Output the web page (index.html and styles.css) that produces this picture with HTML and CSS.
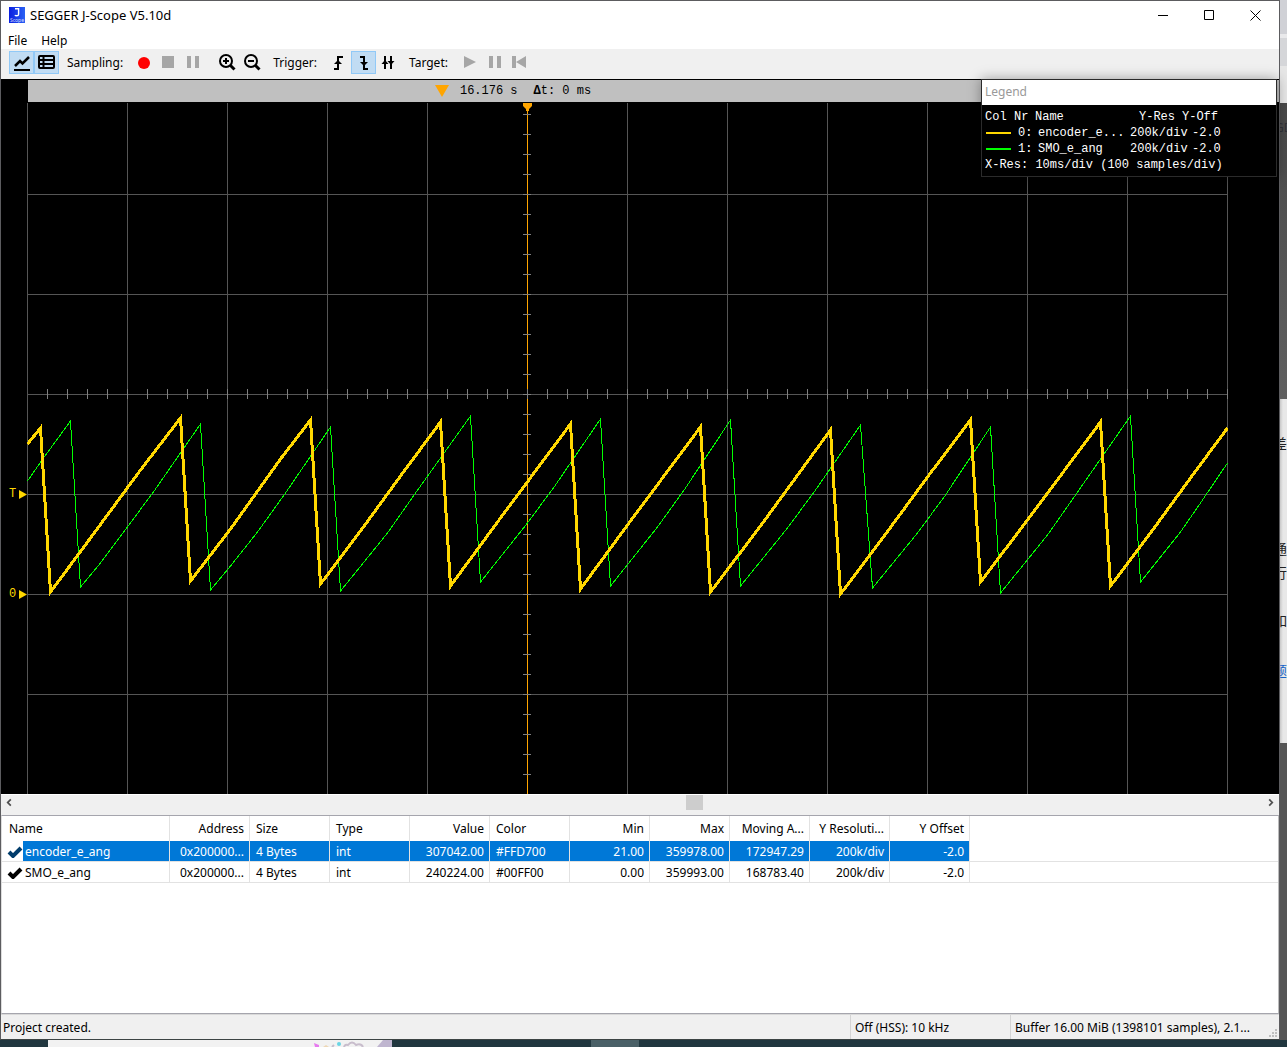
FILE: index.html
```html
<!DOCTYPE html>
<html lang="en">
<head>
<meta charset="utf-8">
<title>SEGGER J-Scope V5.10d</title>
<link rel="stylesheet" href="styles.css">
</head>
<body>
<div class="desktop">
<main class="window">
  <header class="titlebar">
    <svg class="app-icon" viewBox="0 0 16 16" aria-hidden="true">
      <defs><linearGradient id="app" x1="0" y1="0" x2="1" y2="0"><stop offset="0" stop-color="#0a1ee0"/><stop offset="1" stop-color="#2a62f4"/></linearGradient></defs>
      <rect width="16" height="16" fill="url(#app)"/>
      <path d="M6 1.8h3.6v5.4q0 1.6-1.9 1.6q-1.2 0-1.9-.6" fill="none" stroke="#fff" stroke-width="1.4"/>
      <text x="8" y="15" text-anchor="middle" font-size="5" fill="#d5dcff">Scope</text>
    </svg>
    <h1 class="title">SEGGER J-Scope V5.10d</h1>
    <div class="caption">
      <button aria-label="Minimize"><svg viewBox="0 0 11 11"><path d="M0 5.5h10"/></svg></button>
      <button aria-label="Maximize"><svg viewBox="0 0 11 11"><path d="M.5.5h9v9h-9z"/></svg></button>
      <button aria-label="Close"><svg viewBox="0 0 11 11"><path d="M.5.5l10 10M10.500.5l-10 10"/></svg></button>
    </div>
  </header>
  <nav class="menu"><button>File</button><button>Help</button></nav>

  <div class="toolbar">
    <button class="tool on" aria-label="Show graph"><svg viewBox="0 0 25 23"><path d="M5 19h16" stroke="#000" stroke-width="2"/><path d="M6 15l5-5 2.500 2.500L20 6" fill="none" stroke="#000" stroke-width="2.500"/></svg></button>
    <button class="tool on" aria-label="Show list"><svg viewBox="0 0 25 23"><rect x="5" y="5" width="15" height="12" rx="1" fill="none" stroke="#000" stroke-width="2"/><path d="M5 9h15M5 13h15M9.500 5v12" stroke="#000" stroke-width="2"/></svg></button>
    <span class="label">Sampling:</span>
    <button class="tool" aria-label="Record"><svg viewBox="0 0 25 23"><circle cx="12" cy="12" r="6" fill="red"/></svg></button>
    <button class="tool" aria-label="Stop"><svg viewBox="0 0 25 23"><path d="M5 5h12v12H5z" fill="#a6a6a6"/></svg></button>
    <button class="tool" aria-label="Pause"><svg viewBox="0 0 25 23"><path d="M5 5h4v12H5zM13 5h4v12h-4z" fill="#a6a6a6"/></svg></button>
    <span class="gap"></span>
    <button class="tool" aria-label="Zoom in"><svg viewBox="0 0 25 23"><circle cx="11" cy="10" r="6" fill="none" stroke="#000" stroke-width="2"/><path d="M8 10h6M11 7v6" stroke="#000" stroke-width="2"/><path d="M15.500 14.500l4 4" stroke="#000" stroke-width="3"/></svg></button>
    <button class="tool" aria-label="Zoom out"><svg viewBox="0 0 25 23"><circle cx="11" cy="10" r="6" fill="none" stroke="#000" stroke-width="2"/><path d="M8 10h6" stroke="#000" stroke-width="2"/><path d="M15.500 14.500l4 4" stroke="#000" stroke-width="3"/></svg></button>
    <span class="label">Trigger:</span>
    <button class="tool" aria-label="Rising edge"><svg viewBox="0 0 25 23"><path d="M8 18h4V6h5" fill="none" stroke="#000" stroke-width="2"/><path d="M8 13l4-4 4 4z"/></svg></button>
    <button class="tool on" aria-label="Falling edge"><svg viewBox="0 0 25 23"><path d="M9 6h4v12h4" fill="none" stroke="#000" stroke-width="2"/><path d="M9 11l4 4 4-4z"/></svg></button>
    <button class="tool" aria-label="Both edges"><svg viewBox="0 0 25 23"><path d="M9 5v13M15 5v13" stroke="#000" stroke-width="2"/><path d="M5.500 13L9 9l3.500 4zM11.500 10L15 14l3.500-4z"/></svg></button>
    <span class="label">Target:</span>
    <button class="tool" aria-label="Run"><svg viewBox="0 0 25 23"><path d="M7 5v12l12-6z" fill="#a6a6a6"/></svg></button>
    <button class="tool" aria-label="Halt"><svg viewBox="0 0 25 23"><path d="M7 5h4v12H7zM15 5h4v12h-4z" fill="#a6a6a6"/></svg></button>
    <button class="tool" aria-label="Reset"><svg viewBox="0 0 25 23"><path d="M5 5h4v12H5zM19 5v12L9 11z" fill="#a6a6a6"/></svg></button>
  </div>

  <section class="scope">
    <div class="ruler">
      <svg class="marker" viewBox="0 0 14 12" aria-hidden="true"><path d="M0 0h14L7 12z" fill="#ffa500"/></svg>
      <span class="time">16.176 s</span><span><b>Δ</b>t: 0 ms</span>
    </div>
    <svg class="plot" viewBox="1 102 1278 692" role="img" aria-label="Signal plot">
      <g class="grid">
        <path d="M27.500 103V794M127.500 103V794M227.500 103V794M327.500 103V794M427.500 103V794M627.500 103V794M727.500 103V794M827.500 103V794M927.500 103V794M1027.500 103V794M1127.500 103V794M1227.500 103V794"/>
        <path d="M27 194.500H1228M27 294.500H1228M27 394.500H1228M27 494.500H1228M27 594.500H1228M27 694.500H1228"/>
      </g>
      <path class="cursor" d="M527.500 103V794"/>
      <path d="M523 103h9v3l-3 3v2h-3v-2l-3-3z" fill="#ffa500"/>
      <path class="ticks" d="M527 114V794" stroke-width="8" stroke-dasharray="1 19"/>
      <path class="ticks" d="M47 394H1228" stroke-width="10" stroke-dasharray="1 19"/>
      <g class="signals" transform="translate(.5 0)">
        <polyline class="smo" points="27,481 43,458 70,421 80,587 100,563 127,527 155,489 200,424 210,590 230,566 257,532 285,493 330,427 340,591 387,533 415,493 470,416 480,582 527,523 555,485 600,419 610,586 657,527 685,488 730,420 740,586 787,528 815,490 860,425 872,588 917,533 945,495 990,427 1000,593 1047,535 1075,495 1130,416 1140,582 1180,532 1200,503 1227,463"/>
        <polyline class="encoder" points="27,444 40,428 50,592 90,538 140,470 180,418 190,581 230,529 280,459 310,420 320,584 360,531 400,476 440,422 450,586 500,518 570,424 580,589 630,521 700,427 710,592 760,526 830,430 840,594 880,541 930,473 970,420 980,582 1030,516 1100,422 1110,586 1150,533 1190,478 1227,428"/>
      </g>
      <g class="axis"><text x="9" y="497">T</text><path d="M19 490v9l8-4.500z"/><text x="9" y="597">0</text><path d="M19 590v9l8-4.500z"/></g>
    </svg>

    <aside class="legend">
      <h2>Legend</h2>
      <div class="legend-body">
        <table>
          <tr><th class="c-col">Col</th><th class="c-nr">Nr</th><th class="c-name">Name</th><th class="c-res">Y-Res</th><th class="c-off">Y-Off</th></tr>
          <tr><td><i class="swatch yellow"></i></td><td class="num">0:</td><td class="sig">encoder_e...</td><td>200k/div</td><td class="off">-2.0</td></tr>
          <tr><td><i class="swatch green"></i></td><td class="num">1:</td><td class="sig">SMO_e_ang</td><td>200k/div</td><td class="off">-2.0</td></tr>
        </table>
        <p>X-Res: 10ms/div (100 samples/div)</p>
      </div>
    </aside>
  </section>

  <div class="scroller">
    <button aria-label="Scroll left"><svg viewBox="0 0 17 17"><path d="M10 5L6.500 8.500 10 12"/></svg></button>
    <span class="before"></span><span class="thumb"></span><span class="after"></span>
    <button aria-label="Scroll right"><svg viewBox="0 0 17 17"><path d="M7 5l3.500 3.500L7 12"/></svg></button>
  </div>

  <section class="symbols">
    <table>
      <colgroup><col class="wide"><col><col><col><col><col><col><col><col><col><col><col class="rest"></colgroup>
      <thead><tr><th class="first">Name</th><th class="r">Address</th><th>Size</th><th>Type</th><th class="r">Value</th><th>Color</th><th class="r">Min</th><th class="r">Max</th><th class="r">Moving A...</th><th class="r">Y Resoluti...</th><th class="r">Y Offset</th><th class="rest"></th></tr></thead>
      <tbody>
        <tr class="selected"><td class="name"><svg viewBox="0 0 16 12" aria-hidden="true"><path d="M2 6l4 4 8-8"/></svg>encoder_e_ang</td><td class="r">0x200000...</td><td>4 Bytes</td><td>int</td><td class="r">307042.00</td><td>#FFD700</td><td class="r">21.00</td><td class="r">359978.00</td><td class="r">172947.29</td><td class="r">200k/div</td><td class="r">-2.0</td><td class="rest"></td></tr>
        <tr><td class="name"><svg viewBox="0 0 16 12" aria-hidden="true"><path d="M2 6l4 4 8-8"/></svg>SMO_e_ang</td><td class="r">0x200000...</td><td>4 Bytes</td><td>int</td><td class="r">240224.00</td><td>#00FF00</td><td class="r">0.00</td><td class="r">359993.00</td><td class="r">168783.40</td><td class="r">200k/div</td><td class="r">-2.0</td><td class="rest"></td></tr>
      </tbody>
    </table>
  </section>

  <footer class="status">
    <span class="message">Project created.</span>
    <span class="rate">Off (HSS): 10 kHz</span>
    <span class="buffer">Buffer 16.00 MiB (1398101 samples), 2.1...</span>
    <svg class="grip" viewBox="0 0 8 8" aria-hidden="true"><path d="M6 0h2v2H6zM3 3h2v2H3zM6 3h2v2H6zM0 6h2v2H0zM3 6h2v2H3zM6 6h2v2H6z" fill="#bfbfbf"/></svg>
  </footer>
</main>

<div class="behind" aria-hidden="true">
  <div class="tabs"></div><div class="address"></div><div class="bookmarks"></div>
  <div class="banner"><span>GD</span></div>
  <div class="page"><span class="first">差</span><span class="second">通</span><span>行</span><span class="third">如</span><span class="link">题</span></div>
  <div class="below"></div>
</div>
</div>
<div class="taskbar" aria-hidden="true">
  <svg class="preview" viewBox="0 0 344 7"><path d="M0 0h344v7H0z" fill="#f2f2f2"/><path d="M329 7l6-7h9v7z" fill="#bfb5cf"/><path d="M266 3l5 2v2h-4z" fill="#e679ee"/><path d="M275 7l3-2 3 2z" fill="#edd7b5"/><circle cx="291" cy="4" r="2" fill="#69d5e4"/><path d="M284 7l2-2M296 7q1-3 4-2q4-5 8 0q5-2 7 2" fill="none" stroke="#c8bdcc" stroke-width="2"/></svg>
  <span class="task"></span>
</div>
</body>
</html>
```
FILE: styles.css
```css
* { box-sizing: border-box; }
body {
  margin: 0;
  min-height: 100vh;
  display: flex;
  flex-direction: column;
  background: #21373f;
  color: #000;
  font: 12px/16px "Noto Sans", "Noto Sans CJK SC", sans-serif;
}
h1, h2, p { margin: 0; font-size: inherit; font-weight: normal; }
button { margin: 0; padding: 0; border: 0; background: none; color: inherit; font: inherit; }
svg { display: block; }
.desktop { flex: 1; display: flex; }
.window {
  flex: 1;
  min-width: 0;
  display: flex;
  flex-direction: column;
  background: #f0f0f0;
  border: 1px solid #5c5c5f;
  border-bottom-color: #3c4444;
}

.titlebar { display: flex; align-items: center; height: 30px; padding: 0 1px 2px 8px; background: #fff; }
.app-icon { width: 16px; height: 16px; }
.title { margin-left: 5px; flex: 1; font-size: 13px; }
.caption { display: flex; }
.caption button { width: 46px; height: 28px; display: flex; align-items: center; justify-content: center; }
.caption svg { width: 11px; height: 11px; fill: none; stroke: #000; }
.menu { display: flex; height: 18px; background: #fff; }
.menu button { padding: 2px 7px 0; }

.toolbar { display: flex; align-items: center; height: 30px; padding: 0 8px 4px; }
.tool { width: 25px; height: 23px; }
.tool svg { width: 25px; height: 23px; }
.tool.on { background: #c1dcf3; box-shadow: inset 0 0 0 1px #91c9f7; }
.label { padding: 2px 9px 0 8px; }
.gap { width: 8px; }

.scope { position: relative; background: #000; font-family: "Liberation Mono", monospace; }
.ruler {
  display: flex;
  align-items: center;
  height: 23px;
  margin-left: 27px;
  padding-left: calc(32% - 2px);
  border-top: 1px solid #000;
  background: #c0c0c0;
}
.marker { width: 14px; height: 12px; margin-right: 11px; }
.time { margin-right: 16px; }
.plot { width: 100%; height: auto; }
.grid { stroke: #555; fill: none; shape-rendering: crispEdges; }
.cursor { stroke: #ffa500; }
.ticks { stroke: #808080; fill: none; shape-rendering: crispEdges; }
.smo, .encoder { fill: none; shape-rendering: crispEdges; }
.smo { stroke: #0f0; stroke-width: 1; }
.encoder { stroke: #ffd700; stroke-width: 3; }
.axis { fill: #ffd700; font-size: 12px; }

.legend {
  position: absolute;
  top: 0;
  right: 2px;
  width: 296px;
  border: 1px solid #2b2b2b;
  background: #000;
  color: #fff;
  box-shadow: 0 0 12px rgba(0, 0, 0, .35);
}
.legend h2 { height: 25px; padding: 4px 3px; background: #fff; color: #999; font-family: "Noto Sans", sans-serif; }
.legend-body { padding: 4px 3px 3px; }
.legend table { border-collapse: collapse; table-layout: fixed; width: 242px; }
.legend th, .legend td { height: 16px; padding: 0; font-weight: normal; text-align: left; white-space: nowrap; }
.c-col { width: 29px; }
.c-nr { width: 21px; }
.c-name { width: 95px; }
.c-res { width: 52px; }
.legend .c-res { padding-left: 9px; }
.legend .num { padding-left: 4px; }
.legend .sig { padding-left: 3px; }
.legend .off { padding-left: 10px; }
.swatch { display: block; width: 25px; height: 2px; margin-left: 1px; }
.yellow { background: #ffd700; }
.green { background: #0f0; }

.scroller { display: flex; height: 21px; border-top: 1px solid #fff; }
.scroller button { width: 17px; height: 15px; }
.scroller svg { width: 17px; height: 15px; fill: none; stroke: #505050; stroke-width: 2; }
.before { flex: 668; }
.after { flex: 559; }
.thumb { width: 17px; height: 15px; background: #cdcdcd; }

.symbols { flex: 1; min-height: 198px; border: 1px solid #a5a5ad; border-left-color: #ddd; border-right-color: #bbb; background: #fff; }
.symbols table { width: 100%; table-layout: fixed; border-collapse: separate; border-spacing: 0; }
.symbols col { width: 80px; }
.symbols col.wide { width: 168px; }
.symbols col.rest { width: auto; }
.symbols th, .symbols td {
  padding: 0 5px 0 6px;
  border-right: 1px solid #e2e2e2;
  font-weight: normal;
  text-align: left;
  white-space: nowrap;
}
.symbols th { height: 25px; }
.symbols .first { padding-left: 7px; }
.symbols td { height: 21px; padding-top: 2px; border-bottom: 1px solid #e2e2e2; }
.symbols .rest { border-right: 0; }
.symbols .r { text-align: right; }
.symbols .name { padding-left: 23px; }
.name svg { float: left; width: 16px; height: 12px; margin: 2px 0 0 -18px; fill: none; stroke: #000; stroke-width: 4; }
.selected td { background: #0078d7; color: #fff; }
.selected .name { background: linear-gradient(to right, #fff 21px, #0078d7 21px); }
.selected .name svg { stroke: #003c6b; }
.selected .rest { background: #fff; }

.status { display: flex; height: 25px; line-height: 25px; border-top: 1px solid #d9d9d9; }
.status .message { flex: 1; padding-left: 2px; }
.rate { width: 160px; padding-left: 4px; border-left: 1px solid #d4d4d4; }
.buffer { width: 259px; padding-left: 4px; border-left: 1px solid #d4d4d4; white-space: nowrap; }
.grip { width: 8px; height: 8px; margin: 14px 2px 0 0; }

.behind { width: 7px; display: flex; flex-direction: column; overflow: hidden; background: #555; }
.tabs { height: 34px; background: #d0d1d6; }
.address { height: 32px; border-top: 4px solid #e9e9eb; background: #d5d6d9; }
.bookmarks { height: 37px; background: #e6e6e6; }
.banner { height: 296px; padding-top: 17px; background: linear-gradient(#484848, #606060); color: #303238; }
.banner span { margin-left: -5px; }
.page { height: 344px; padding-top: 36px; background: linear-gradient(to right, #c8c8c8, #e8e8e8 3px); font-size: 14px; color: #222; }
.page span { display: block; width: 14px; height: 18px; margin-left: -7px; line-height: 18px; }
.page .first { margin-bottom: 87px; }
.page .second { margin-bottom: 6px; }
.page .third { margin: 30px 0 32px -7px; }
.page .link { color: #1763c6; }
.below { flex: 1; }
.taskbar { display: flex; height: 7px; padding-left: 48px; }
.preview { width: 344px; height: 7px; }
.task { width: 48px; margin-left: 199px; background: #4a6067; }
```
